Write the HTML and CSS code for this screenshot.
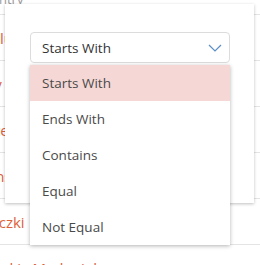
FILE: index.html
```html
<!DOCTYPE html>
<html>
<head>
<meta charset="utf-8">
<link rel="stylesheet" href="styles.css">
</head>
<body>
<div class="table">
  <div class="row head"><span class="cell">Country</span></div>
  <div class="row"><span class="cell">Pawlu</span></div>
  <div class="row"><span class="cell">Amy</span></div>
  <div class="row"><span class="cell">Carter</span></div>
  <div class="row"><span class="cell">Evans</span></div>
  <div class="row"><span class="cell">Jaruczki</span></div>
  <div class="row"><span class="cell">Skorskiy Madaniel</span></div>
</div>

<div class="panel">
  <div class="select">
    <span class="select-value">Starts With</span>
    <svg class="chev" width="14" height="8" viewBox="0 0 14 8"><path d="M1 1 L7 7 L13 1" fill="none" stroke="#5a8fc7" stroke-width="1.2"/></svg>
  </div>
</div>

<ul class="menu">
  <li class="item active">Starts With</li>
  <li class="item">Ends With</li>
  <li class="item">Contains</li>
  <li class="item">Equal</li>
  <li class="item">Not Equal</li>
</ul>
</body>
</html>
```
FILE: styles.css
```css
html, body {
  margin: 0;
  padding: 0;
  background: #fff;
  font-family: "Open Sans", "Noto Sans", sans-serif;
  width: 260px;
  height: 265px;
  overflow: hidden;
}
.table {
  margin-left: -29px;
  margin-top: -31px;
}
.row {
  height: 45px;
  border-bottom: 1px solid #e4e4e4;
  display: flex;
  align-items: center;
}
.row .cell {
  font-size: 15px;
  color: #dd5f3c;
  white-space: nowrap;
}
.row.head .cell {
  color: #999;
  font-size: 13px;
  padding-top: 14px;
  padding-left: 4px;
}
.panel {
  position: absolute;
  left: 5px;
  top: 4px;
  width: 249px;
  height: 199px;
  background: #fff;
  box-shadow: 0 1px 3px rgba(0,0,0,0.25);
  box-sizing: border-box;
  padding: 28px 25px 0 25px;
}
.select {
  height: 31px;
  border: 1px solid #dcdcdc;
  border-radius: 4px;
  display: flex;
  align-items: center;
  justify-content: space-between;
  padding: 0 7px 0 11px;
  box-sizing: border-box;
  width: 200px;
}
.select-value {
  font-size: 13.5px;
  color: #333;
}
.menu {
  position: absolute;
  left: 30px;
  top: 65px;
  width: 200px;
  margin: 0;
  padding: 0;
  list-style: none;
  background: #fff;
  box-shadow: 0 1px 4px rgba(0,0,0,0.3);
}
.item {
  height: 36px;
  display: flex;
  align-items: center;
  padding-left: 12px;
  font-size: 13.5px;
  color: #4a4a4a;
}
.item.active {
  background: #f5d8d5;
}
```
